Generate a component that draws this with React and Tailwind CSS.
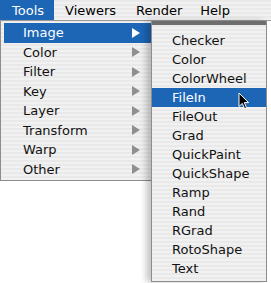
import React from 'react';

const stripes =
  'bg-[repeating-linear-gradient(0deg,#f1f1f1_0px,#f1f1f1_2px,#e9e9e9_2px,#e9e9e9_4px)]';

const Arrow = ({ white }) => (
  <svg width="8" height="10" viewBox="0 0 8 10" className="shrink-0">
    <path d="M0 0 L8 5 L0 10 Z" fill={white ? '#ffffff' : '#8f8f8f'} />
  </svg>
);

const Cursor = () => (
  <svg
    width="12"
    height="18"
    viewBox="0 0 12 18"
    className="absolute left-[86px] top-[4px]"
  >
    <path
      d="M1 1 L1 14.5 L4.3 11.4 L6.6 16.6 L8.6 15.7 L6.3 10.6 L10.6 10.6 Z"
      fill="#000"
      stroke="#fff"
      strokeWidth="1"
      strokeLinejoin="round"
    />
  </svg>
);

const App = () => {
  const bar = [
    { label: 'Tools', cls: 'pl-[12px] pr-[10px] bg-[#1d66b6] text-white' },
    { label: 'Viewers', cls: 'pl-[11px] pr-[10px]' },
    { label: 'Render', cls: 'pl-[10px] pr-[9px]' },
    { label: 'Help', cls: 'pl-[9px] pr-[9px]' },
  ];
  const tools = ['Image', 'Color', 'Filter', 'Key', 'Layer', 'Transform', 'Warp', 'Other'];
  const images = [
    'Checker',
    'Color',
    'ColorWheel',
    'FileIn',
    'FileOut',
    'Grad',
    'QuickPaint',
    'QuickShape',
    'Ramp',
    'Rand',
    'RGrad',
    'RotoShape',
    'Text',
  ];

  return (
    <div className="w-[271px] h-[283px] bg-white overflow-hidden text-[13px] leading-none text-black font-['DejaVu_Sans',sans-serif]">
      {/* Menu bar */}
      <div className={`flex h-[21px] border-b border-[#9a9a9a] ${stripes}`}>
        {bar.map((item) => (
          <div key={item.label} className={`flex items-center h-[20px] ${item.cls}`}>
            {item.label}
          </div>
        ))}
      </div>

      <div className="flex items-start">
        {/* Tools menu */}
        <div className={`w-[151px] border-l border-b border-[#8c8c8c] pt-[2px] pb-[1px] ${stripes}`}>
          {tools.map((label, i) => (
            <div
              key={label}
              className={`flex items-center justify-between h-[19.5px] ml-[3px] pl-[19px] pr-[11px] ${
                i === 0 ? 'bg-[#1d66b6] text-white' : 'text-[#111]'
              }`}
            >
              <span>{label}</span>
              <Arrow white={i === 0} />
            </div>
          ))}
        </div>

        {/* Image submenu */}
        <div
          className={`relative w-[116px] border-x border-b border-[#8c8c8c] shadow-[-5px_0_6px_rgba(0,0,0,0.22)] ${stripes}`}
        >
          <div className="h-[4px] bg-[#6e6e6e]" />
          <div className="pt-[6px] pb-[3px]">
            {images.map((label) => (
              <div
                key={label}
                className={`relative flex items-center h-[19px] pl-[20px] ${
                  label === 'FileIn' ? 'bg-[#1d66b6] text-white' : 'text-[#111]'
                }`}
              >
                {label}
                {label === 'FileIn' && <Cursor />}
              </div>
            ))}
          </div>
        </div>
      </div>
    </div>
  );
};

export default App;
